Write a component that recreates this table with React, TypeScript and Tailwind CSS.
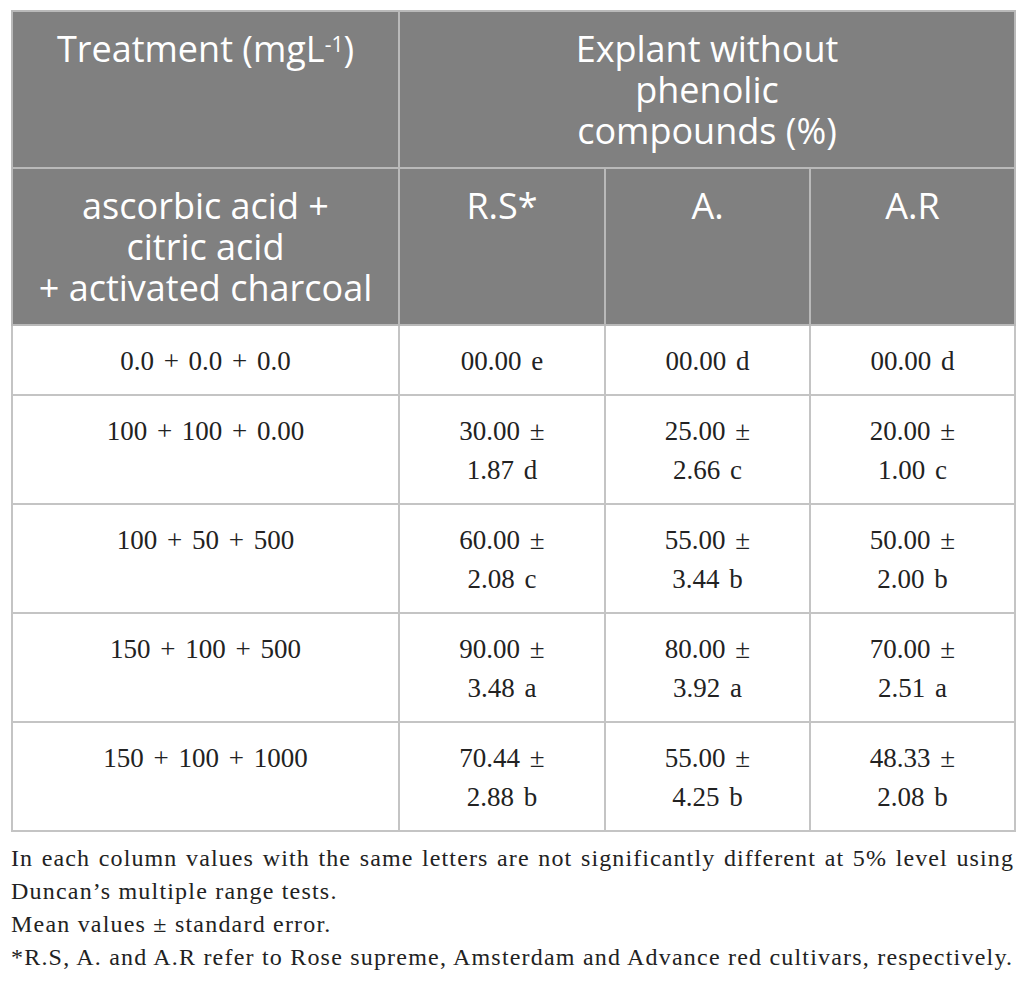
const rows = [
  { t: "0.0 + 0.0 + 0.0", v: [["00.00 e"], ["00.00 d"], ["00.00 d"]] },
  { t: "100 + 100 + 0.00", v: [["30.00 ±", "1.87 d"], ["25.00 ±", "2.66 c"], ["20.00 ±", "1.00 c"]] },
  { t: "100 + 50 + 500", v: [["60.00 ±", "2.08 c"], ["55.00 ±", "3.44 b"], ["50.00 ±", "2.00 b"]] },
  { t: "150 + 100 + 500", v: [["90.00 ±", "3.48 a"], ["80.00 ±", "3.92 a"], ["70.00 ±", "2.51 a"]] },
  { t: "150 + 100 + 1000", v: [["70.44 ±", "2.88 b"], ["55.00 ±", "4.25 b"], ["48.33 ±", "2.08 b"]] },
];

const head =
  "border-2 border-[#b9b9b9] bg-[#808080] text-white text-center align-top font-normal px-2 pt-[16px] pb-[16px] text-[36px] leading-[41px] font-['Open_Sans',sans-serif]";
const cell =
  "border-2 border-[#c4c4c4] text-center align-top px-2 pt-[16px] pb-[12px] text-[27px] leading-[39.5px] [word-spacing:3px] text-[#222]";

export default function App() {
  return (
    <div className="bg-white min-h-screen pt-[10px] px-[11px] font-['Liberation_Serif',serif]">
      <table className="w-[1003px] border-collapse table-fixed">
        <colgroup>
          <col className="w-[387px]" />
          <col className="w-[206px]" />
          <col className="w-[205px]" />
          <col className="w-[205px]" />
        </colgroup>
        <thead>
          <tr>
            <th className={head}>
              Treatment (mgL<sup className="text-[21px]">-1</sup>)
            </th>
            <th colSpan={3} className={head}>
              Explant without
              <br />
              phenolic
              <br />
              compounds (%)
            </th>
          </tr>
          <tr>
            <th className={head}>
              ascorbic acid +
              <br />
              citric acid
              <br />+ activated charcoal
            </th>
            <th className={head}>R.S*</th>
            <th className={head}>A.</th>
            <th className={head}>A.R</th>
          </tr>
        </thead>
        <tbody>
          {rows.map((r) => (
            <tr key={r.t}>
              <td className={cell}>{r.t}</td>
              {r.v.map((lines, i) => (
                <td key={i} className={cell}>
                  {lines.map((l) => (
                    <div key={l}>{l}</div>
                  ))}
                </td>
              ))}
            </tr>
          ))}
        </tbody>
      </table>
      <div className="w-[1003px] mt-[10px] text-[24px] leading-[33px] tracking-[1.2px] text-[#222] whitespace-nowrap">
        <p className="tracking-[1.1px] text-justify [text-align-last:justify]">
          In each column values with the same letters are not significantly different at 5% level using
        </p>
        <p>Duncan’s multiple range tests.</p>
        <p>Mean values ± standard error.</p>
        <p>*R.S, A. and A.R refer to Rose supreme, Amsterdam and Advance red cultivars, respectively.</p>
      </div>
    </div>
  );
}
